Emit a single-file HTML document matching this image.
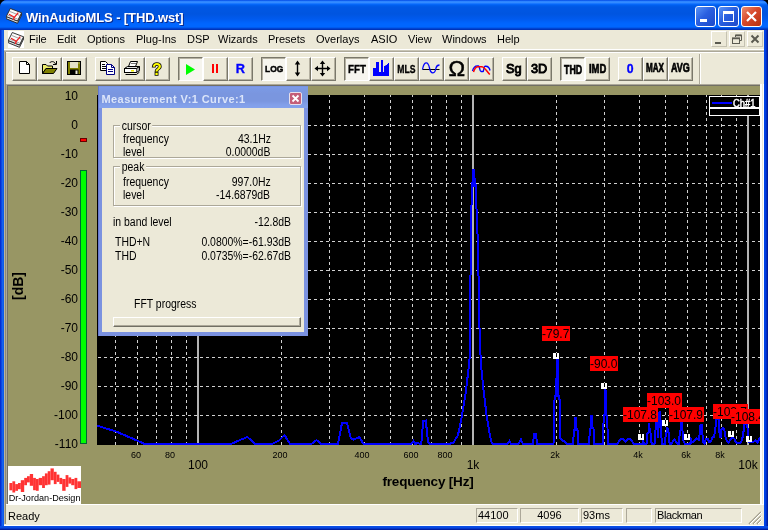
<!DOCTYPE html>
<html><head><meta charset="utf-8"><title>WinAudioMLS - [THD.wst]</title>
<style>
*{box-sizing:border-box;margin:0;padding:0}
html,body{width:768px;height:530px;overflow:hidden;background:#000}
body{font-family:"Liberation Sans",sans-serif;font-size:11px;color:#000;position:relative}
.abs{position:absolute}
#frame{will-change:transform;position:absolute;left:0;top:0;width:768px;height:530px;background:#0046d5;border-radius:7px 7px 0 0;overflow:hidden}
#title{position:absolute;left:0;top:0;width:768px;height:30px;background:linear-gradient(180deg,#0040dc 0px,#1f78ff 1px,#3c91ff 2px,#2a84ff 3px,#0a6cff 4px,#0060f0 5px,#0057e4 7px,#0055e0 14px,#005aee 19px,#0062fa 22px,#0066ff 24px,#0066ff 27px,#0050e0 28px,#0038c4 29px,#002fb0 30px)}
#ttext{position:absolute;left:26px;top:9px;letter-spacing:-0.12px;color:#fff;font-weight:bold;font-size:13px;line-height:18px;white-space:nowrap;text-shadow:1px 1px 0 #0a2a8c}
#lb{position:absolute;left:0;top:30px;width:4px;height:500px;background:linear-gradient(90deg,#0020c8 0,#0a3ee0 1.2px,#1462ee 2.5px,#0c55e6 4px)}
#rb{position:absolute;left:764px;top:30px;width:4px;height:500px;background:linear-gradient(90deg,#0046e8 0,#003ee0 1.5px,#0026b4 3px,#00148c 4px)}
#bb{position:absolute;left:0;top:526px;width:768px;height:4px;background:linear-gradient(180deg,#0a50e8 0,#0848e0 2px,#0026b4 3px,#00148c 4px)}
#client{position:absolute;left:0;top:0;width:768px;height:530px}
#cbg{position:absolute;left:4px;top:30px;width:760px;height:496px;background:#ece9d8}
#mdi{position:absolute;left:0;top:0;width:768px;height:530px}
.tb{position:absolute;top:6px;width:21px;height:21px;border-radius:3px;border:1px solid #fff;background:linear-gradient(135deg,#5a94f6,#2a5fe0 45%,#1d49c9)}
.tb.close{background:linear-gradient(135deg,#ec8d70,#d8492b 45%,#b8320f)}
.menu span{position:absolute;top:32px;line-height:14px;font-size:11px;white-space:nowrap}
.mb{position:absolute;top:31px;width:16px;height:16px;border:1px solid;border-color:#fff #c5c2b2 #c5c2b2 #fff}
/* toolbar buttons */
.bt{position:absolute;top:57px;width:25px;height:24px;border:1px solid;border-color:#fff #7a786b #7a786b #fff;box-shadow:inset -1px -1px 0 #b5b1a1;background:#ece9d8;overflow:hidden}
.bt.dn{border-color:#7a786b #fff #fff #7a786b;box-shadow:inset 1px 1px 0 #b5b1a1;background:#f6f5ee}
.bt svg{position:absolute;left:0;top:0;will-change:transform}
.bt .t{position:absolute;left:0;top:0;width:22px;height:21px;text-align:center;font-weight:bold;white-space:nowrap}
/* axis labels */
.yl{position:absolute;left:28px;width:50px;text-align:right;font-size:12px;line-height:14px}
.xs{position:absolute;margin-left:-1px;top:450px;width:40px;text-align:center;font-size:9px;line-height:11px}
.xb{position:absolute;top:458px;width:40px;text-align:center;font-size:12px;line-height:14px}
.gd{stroke:#d0d0d0;stroke-width:1;stroke-dasharray:3 3;shape-rendering:crispEdges}
.ml{font-family:"Liberation Sans",sans-serif;font-size:12px;fill:#000}
/* dialog */
#dlg{position:absolute;left:98px;top:86px;width:210px;height:250px;background:#7b92e0;box-shadow:inset 1px 0 0 #6678d0}
#dlgt{position:absolute;left:1px;top:0;width:209px;height:22px;background:linear-gradient(180deg,#6f8ade 0,#7d9ce8 1px,#7b99e4 3px,#7a96df 8px,#7a96df 15px,#82a0ea 19px,#84a2ec 22px)}
#dlgb{position:absolute;left:4px;top:22px;width:202px;height:224px;background:#ece9d8}
.dt{position:absolute;font-size:12px;line-height:14px;white-space:nowrap;transform:scaleX(.87);transform-origin:0 0}
.dr{position:absolute;font-size:12px;line-height:14px;white-space:nowrap;transform:scaleX(.87);transform-origin:100% 0;text-align:right}
.gb{position:absolute;border:1px solid #aca899;box-shadow:1px 1px 0 #fff, inset 1px 1px 0 #fff}
.gl{position:absolute;background:#ece9d8;padding:0 2px;font-size:12px;line-height:14px;transform:scaleX(.87);transform-origin:0 0}
/* status */
.sp{position:absolute;top:508px;height:15px;border:1px solid;border-color:#aca899 #fff #fff #aca899;font-size:11px;line-height:13px;padding-left:1px;white-space:nowrap}

</style></head><body>
<div id="frame">
<div id="title">
 <svg class="abs" style="left:6px;top:8px" width="16" height="16" viewBox="0 0 16 16"><polygon points="0.3,8.5 11.5,13 15.6,4.8 15.6,7 11.5,15.3 0.3,10.8" fill="#ddd" stroke="#222" stroke-width="0.9"/><polygon points="4.3,0.5 15.6,4.8 11.5,13 0.3,8.5" fill="#fafafa" stroke="#222" stroke-width="0.9"/><path d="M3.6,3.4 L13.6,7.4 M1.8,7.2 L11.6,11.1" stroke="#8a8a8a" stroke-width="0.8" fill="none"/><path d="M3,6.2 L8.4,9.2 L12.3,4.6 M8.4,9.2 L7.2,12" stroke="#f02020" stroke-width="1.3" fill="none"/></svg>
 <div id="ttext">WinAudioMLS - [THD.wst]</div>
 <div class="tb" style="left:695px"><div class="abs" style="left:4px;top:12px;width:7px;height:3px;background:#fff"></div></div>
 <div class="tb" style="left:718px"><div class="abs" style="left:4px;top:4px;width:11px;height:11px;border:1px solid #fff;border-top-width:3px"></div></div>
 <div class="tb close" style="left:741px"><svg class="abs" style="left:0;top:0" width="19" height="19"><path d="M5,5 L14,14 M14,5 L5,14" stroke="#fff" stroke-width="2.2"/></svg></div>
</div>

<div id="lb"></div><div id="rb"></div><div id="bb"></div>
<div id="client">
<div id="cbg"></div>
<div class="abs" style="left:8px;top:31px;width:16px;height:17px;background:#fff"></div>
<svg class="abs" style="left:8px;top:31.5px" width="16" height="16" viewBox="0 0 16 16"><polygon points="0.3,8.5 11.5,13 15.6,4.8 15.6,7 11.5,15.3 0.3,10.8" fill="#ddd" stroke="#222" stroke-width="0.9"/><polygon points="4.3,0.5 15.6,4.8 11.5,13 0.3,8.5" fill="#fafafa" stroke="#222" stroke-width="0.9"/><path d="M3.6,3.4 L13.6,7.4 M1.8,7.2 L11.6,11.1" stroke="#8a8a8a" stroke-width="0.8" fill="none"/><path d="M3,6.2 L8.4,9.2 L12.3,4.6 M8.4,9.2 L7.2,12" stroke="#f02020" stroke-width="1.3" fill="none"/></svg>
<div class="menu">
<span style="left:29px">File</span><span style="left:57px">Edit</span><span style="left:87px">Options</span><span style="left:136px">Plug-Ins</span><span style="left:187px">DSP</span><span style="left:218px">Wizards</span><span style="left:268px">Presets</span><span style="left:316px">Overlays</span><span style="left:371px">ASIO</span><span style="left:408px">View</span><span style="left:442px">Windows</span><span style="left:497px">Help</span>
</div>
<div class="mb" style="left:711px"><div class="abs" style="left:3px;top:10px;width:6px;height:2px;background:#5a5a50"></div></div>
<div class="mb" style="left:729px"><svg class="abs" style="left:0;top:0" width="14" height="14"><path d="M5.5,5 V3 H11.5 V8.5 H9.5" fill="none" stroke="#5a5a50" stroke-width="1"/><path d="M5,3.5 H12" stroke="#5a5a50" stroke-width="1.6"/><rect x="2.5" y="6" width="7" height="5.5" fill="none" stroke="#5a5a50"/><path d="M2,6.5 H10" stroke="#5a5a50" stroke-width="1.6"/></svg></div>
<div class="mb" style="left:747px"><svg class="abs" style="left:0;top:0" width="14" height="14"><path d="M3.5,3.5 L10.5,10.5 M10.5,3.5 L3.5,10.5" stroke="#5a5a50" stroke-width="2"/></svg></div>

<div class="abs" style="left:4px;top:49px;width:760px;height:1px;background:#fff"></div>
<div class="abs" style="left:4px;top:50px;width:760px;height:1px;background:#c9c6b6"></div>
<div class="abs" style="left:4px;top:51px;width:760px;height:1px;background:#aca899"></div>
<div class="abs" style="left:4px;top:52px;width:760px;height:1px;background:#fff"></div>
<div class="abs" style="left:699px;top:54px;width:1px;height:30px;background:#aca899"></div>
<div class="abs" style="left:700px;top:54px;width:1px;height:30px;background:#fff"></div>
<div class="bt" style="left:12px"><svg width="23" height="22" viewBox="0 0 23 22"><path d="M6.5,3.5 H13.5 L16.5,6.5 V15.5 H6.5 Z" fill="#fff" stroke="#000"/><path d="M13.5,3.5 V6.5 H16.5" fill="none" stroke="#000"/></svg></div>
<div class="bt" style="left:37px"><svg width="23" height="22" viewBox="0 0 23 22"><path d="M4.5,15.5 V6.5 H8 L9.5,8 H14.5 V10.5 H8 Z" fill="#ecec6a" stroke="#000" stroke-width="1"/><path d="M4.5,15.5 L8,10.5 H19 L15.5,15.5 Z" fill="#808000" stroke="#000" stroke-width="1"/><path d="M11.5,5 C13,3 16.5,3 17.5,6" fill="none" stroke="#000"/><path d="M15,6.5 H18.5 V3" fill="none" stroke="#000"/></svg></div>
<div class="bt" style="left:62px"><svg width="23" height="22" viewBox="0 0 23 22"><rect x="4.5" y="3.5" width="13" height="13" fill="#808000" stroke="#000"/><rect x="7" y="4" width="8" height="6" fill="#e4e1c8"/><rect x="7" y="11.5" width="8.5" height="5" fill="#000"/><rect x="12.5" y="12.5" width="2" height="3.5" fill="#ece9d8"/><rect x="15.5" y="4.5" width="1" height="1" fill="#ece9d8"/></svg></div>
<div class="bt" style="left:95px"><svg width="23" height="22" viewBox="0 0 23 22"><path d="M4.5,3.5 H9.5 L11.5,5.5 V12.5 H4.5 Z" fill="#fff" stroke="#000"/><path d="M6,6.5 H9 M6,8.5 H10 M6,10.5 H10" stroke="#000"/><path d="M10.5,6.5 H15.5 L18.5,9.5 V16.5 H10.5 Z" fill="#fff" stroke="#000080"/><path d="M15.5,6.5 V9.5 H18.5" fill="none" stroke="#000080"/><path d="M12,11.5 H17 M12,13.5 H17" stroke="#000080"/></svg></div>
<div class="bt" style="left:120px"><svg width="23" height="22" viewBox="0 0 23 22"><path d="M7.5,8.5 L9.5,3.5 H16.5 L14.5,8.5 Z" fill="#fff" stroke="#000"/><path d="M10,5.5 H15" stroke="#777"/><path d="M3.5,10.5 L6.5,8.5 H18.5 L15.5,10.5 Z" fill="#ddd" stroke="#000"/><rect x="3.5" y="10.5" width="12" height="4" fill="#fff" stroke="#000"/><path d="M15.5,10.5 L18.5,8.5 V12.5 L15.5,14.5" fill="#aaa" stroke="#000"/><path d="M4.5,16.5 H15.5 L18.5,14" fill="none" stroke="#000"/><rect x="10" y="12" width="3" height="1.5" fill="#ee0"/></svg></div>
<div class="bt" style="left:145px"><svg width="23" height="22" viewBox="0 0 23 22"><text x="6" y="16.5" font-size="16" fill="#ff0" stroke="#000" stroke-width="1.6" paint-order="stroke" font-family="Liberation Sans,sans-serif" font-weight="bold">?</text></svg></div>
<div class="bt dn" style="left:178px"><svg width="23" height="22" viewBox="0 0 23 22"><polygon points="7,6 16,11.5 7,17" fill="#0f0"/></svg></div>
<div class="bt" style="left:203px"><svg width="23" height="22" viewBox="0 0 23 22"><rect x="8" y="6" width="2" height="9" fill="#f00"/><rect x="12" y="6" width="2" height="9" fill="#f00"/></svg></div>
<div class="bt" style="left:228px"><svg width="23" height="22" viewBox="0 0 23 22"><text x="6.7" y="14.7" font-size="13" textLength="9.2" lengthAdjust="spacingAndGlyphs" fill="#00f" stroke="#00f" stroke-width="0.35" font-family="Liberation Sans,sans-serif" font-weight="bold">R</text></svg></div>
<div class="bt dn" style="left:261px"><svg width="23" height="22" viewBox="0 0 23 22"><text x="3" y="14" font-size="9.6" textLength="18.3" lengthAdjust="spacingAndGlyphs" fill="#000" stroke="#000" stroke-width="0.5" font-family="Liberation Sans,sans-serif" font-weight="bold">LOG</text></svg></div>
<div class="bt" style="left:286px"><svg width="23" height="22" viewBox="0 0 23 22"><path d="M10.5,4 V17" stroke="#000" stroke-width="1.4"/><polygon points="10.5,2.5 7.8,6.5 13.2,6.5"/><polygon points="10.5,18.5 7.8,14.5 13.2,14.5"/></svg></div>
<div class="bt" style="left:311px"><svg width="23" height="22" viewBox="0 0 23 22"><path d="M10.5,4 V17 M4,10.5 H17" stroke="#000" stroke-width="1.4"/><polygon points="10.5,2.5 7.8,6 13.2,6"/><polygon points="10.5,18.5 7.8,15 13.2,15"/><polygon points="2.5,10.5 6,7.8 6,13.2"/><polygon points="18.5,10.5 15,7.8 15,13.2"/></svg></div>
<div class="bt dn" style="left:344px"><svg width="23" height="22" viewBox="0 0 23 22"><text x="3" y="14.7" font-size="11" textLength="18" lengthAdjust="spacingAndGlyphs" fill="#000" stroke="#000" stroke-width="0.35" font-family="Liberation Sans,sans-serif" font-weight="bold">FFT</text></svg></div>
<div class="bt" style="left:369px"><svg width="23" height="22" viewBox="0 0 23 22"><path d="M3,18 V10 H6 V4 H9 V14 H11 V2 H13 V14 H14 V8 H15 V7.5 H16 V7 H17 V6 H18 V5 H19 V18 Z" fill="#00f"/></svg></div>
<div class="bt" style="left:394px"><svg width="23" height="22" viewBox="0 0 23 22"><text x="2.3" y="14.7" font-size="11" textLength="18.2" lengthAdjust="spacingAndGlyphs" fill="#000" stroke="#000" stroke-width="0.35" font-family="Liberation Sans,sans-serif" font-weight="bold">MLS</text></svg></div>
<div class="bt" style="left:419px"><svg width="23" height="22" viewBox="0 0 23 22"><path d="M2.5,11.5 H19.5" stroke="#000"/><path d="M2.5,11.5 C4,3 8,3 9.5,10 C11,17 15,16 16,10 C16.5,8 18,7 19.5,7" fill="none" stroke="#00f" stroke-width="1.3"/></svg></div>
<div class="bt" style="left:444px"><svg width="23" height="22" viewBox="0 0 23 22"><text x="3.5" y="17.5" font-size="22.5" font-family="Liberation Sans,sans-serif" textLength="16.6" lengthAdjust="spacingAndGlyphs" stroke="#000" stroke-width="0.5">&#937;</text></svg></div>
<div class="bt" style="left:469px"><svg width="23" height="22" viewBox="0 0 23 22"><path d="M2.5,13 C3.5,9 6,7.6 8.5,8 C10,8.5 9.5,13.5 11,13.5 H13 C14,13.5 13.5,8.5 15,8.3 C17.5,8 19.5,10 20,12.5" fill="none" stroke="#00f" stroke-width="1.4"/><path d="M3.5,14 C4.5,10.5 6,8.7 8,8.7 H12 C14.5,9 16.5,13 19.8,16.5" fill="none" stroke="#f00" stroke-width="1.5"/></svg></div>
<div class="bt" style="left:502px"><svg width="23" height="22" viewBox="0 0 23 22"><text x="3" y="14.7" font-size="13.5" textLength="15.6" lengthAdjust="spacingAndGlyphs" fill="#000" stroke="#000" stroke-width="1" font-family="Liberation Sans,sans-serif" font-weight="normal">Sg</text></svg></div>
<div class="bt" style="left:527px"><svg width="23" height="22" viewBox="0 0 23 22"><text x="3" y="14.7" font-size="13.5" textLength="16.2" lengthAdjust="spacingAndGlyphs" fill="#000" stroke="#000" stroke-width="1" font-family="Liberation Sans,sans-serif" font-weight="normal">3D</text></svg></div>
<div class="bt dn" style="left:560px"><svg width="23" height="22" viewBox="0 0 23 22"><text x="3" y="15.5" font-size="13" textLength="18.2" lengthAdjust="spacingAndGlyphs" fill="#000" stroke="#000" stroke-width="0.7" font-family="Liberation Sans,sans-serif" font-weight="bold">THD</text></svg></div>
<div class="bt" style="left:585px"><svg width="23" height="22" viewBox="0 0 23 22"><text x="3" y="14.8" font-size="13" textLength="17.3" lengthAdjust="spacingAndGlyphs" fill="#000" stroke="#000" stroke-width="0.7" font-family="Liberation Sans,sans-serif" font-weight="bold">IMD</text></svg></div>
<div class="bt" style="left:618px"><svg width="23" height="22" viewBox="0 0 23 22"><text x="7.8" y="14.8" font-size="13" textLength="6.8" lengthAdjust="spacingAndGlyphs" fill="#00f" stroke="#00f" stroke-width="0.35" font-family="Liberation Sans,sans-serif" font-weight="bold">0</text></svg></div>
<div class="bt" style="left:643px"><svg width="23" height="22" viewBox="0 0 23 22"><text x="2" y="14" font-size="12" textLength="18" lengthAdjust="spacingAndGlyphs" fill="#000" stroke="#000" stroke-width="0.7" font-family="Liberation Sans,sans-serif" font-weight="bold">MAX</text></svg></div>
<div class="bt" style="left:668px"><svg width="23" height="22" viewBox="0 0 23 22"><text x="2" y="14" font-size="12" textLength="18.8" lengthAdjust="spacingAndGlyphs" fill="#000" stroke="#000" stroke-width="0.7" font-family="Liberation Sans,sans-serif" font-weight="bold">AVG</text></svg></div>

<div id="mdi">
<!-- mdi sunken edge + olive -->
<div class="abs" style="left:6px;top:84px;width:756px;height:420px;background:#aca899"></div>
<div class="abs" style="left:7px;top:85px;width:755px;height:419px;background:#716f64"></div>
<div class="abs" style="left:760px;top:84px;width:4px;height:420px;background:linear-gradient(90deg,#fff 0,#fff 2px,#ece9d8 2px,#ece9d8 3px,#fff 3px)"></div>
<div class="abs" style="left:4px;top:52px;width:1px;height:472px;background:#b8b39e"></div>
<div class="abs" style="left:5px;top:52px;width:1px;height:472px;background:#8d8976"></div>
<div class="abs" style="left:8px;top:86px;width:752px;height:418px;background:#989664"></div>
<div class="yl" style="top:89px">10</div>
<div class="yl" style="top:118px">0</div>
<div class="yl" style="top:147px">-10</div>
<div class="yl" style="top:176px">-20</div>
<div class="yl" style="top:205px">-30</div>
<div class="yl" style="top:234px">-40</div>
<div class="yl" style="top:263px">-50</div>
<div class="yl" style="top:292px">-60</div>
<div class="yl" style="top:321px">-70</div>
<div class="yl" style="top:350px">-80</div>
<div class="yl" style="top:379px">-90</div>
<div class="yl" style="top:408px">-100</div>
<div class="yl" style="top:437px">-110</div>
<div class="xs" style="left:117px">60</div>
<div class="xs" style="left:151px">80</div>
<div class="xb" style="left:178px">100</div>
<div class="xs" style="left:261px">200</div>
<div class="xs" style="left:343px">400</div>
<div class="xs" style="left:392px">600</div>
<div class="xs" style="left:426px">800</div>
<div class="xb" style="left:453px">1k</div>
<div class="xs" style="left:536px">2k</div>
<div class="xs" style="left:619px">4k</div>
<div class="xs" style="left:667px">6k</div>
<div class="xs" style="left:701px">8k</div>
<div class="xb" style="left:728px">10k</div>
<div class="abs" style="left:-32.5px;top:277.5px;width:100px;height:16px;line-height:16px;text-align:center;font-weight:bold;font-size:14px;transform:rotate(-90deg)">[dB]</div>
<div class="abs" style="left:328px;top:473.5px;width:200px;text-align:center;font-weight:bold;font-size:13.5px;letter-spacing:-0.2px;line-height:16px">frequency [Hz]</div>
<!-- level meter -->
<div class="abs" style="left:80px;top:170px;width:7px;height:274px;background:#0f0;border:1px solid #063"></div>
<div class="abs" style="left:80px;top:138px;width:7px;height:4px;background:#f00;border:1px solid #600"></div>
<!-- logo -->
<div class="abs" style="left:8px;top:466px;width:73px;height:38px;background:#fff"></div>
<svg class="abs" style="left:8px;top:466px" width="73" height="38" viewBox="0 0 73 38"><g fill="#ff3333"><rect x="1.4" y="17.0" width="3.0" height="7.3"/><rect x="4.4" y="15.3" width="2.8" height="11.2"/><rect x="7.2" y="18.1" width="2.8" height="6.7"/><rect x="10.0" y="17.0" width="2.8" height="6.2"/><rect x="12.8" y="14.2" width="3.4" height="11.8"/><rect x="16.2" y="11.9" width="2.8" height="7.3"/><rect x="19.0" y="10.2" width="2.8" height="6.2"/><rect x="21.8" y="8.0" width="3.3" height="11.8"/><rect x="25.1" y="11.9" width="2.8" height="12.3"/><rect x="27.9" y="13.0" width="2.8" height="11.8"/><rect x="30.7" y="11.9" width="3.4" height="7.3"/><rect x="34.1" y="10.2" width="2.8" height="11.8"/><rect x="36.9" y="7.4" width="2.8" height="11.8"/><rect x="39.7" y="5.2" width="2.8" height="13.4"/><rect x="42.5" y="2.4" width="3.3" height="11.8"/><rect x="45.8" y="5.8" width="2.8" height="12.3"/><rect x="48.6" y="8.6" width="2.8" height="7.3"/><rect x="51.4" y="11.9" width="2.8" height="6.2"/><rect x="54.2" y="13.0" width="3.4" height="11.8"/><rect x="57.6" y="9.1" width="2.8" height="11.8"/><rect x="60.4" y="11.4" width="2.8" height="6.2"/><rect x="63.2" y="13.0" width="3.3" height="6.2"/><rect x="66.5" y="11.9" width="2.8" height="11.2"/><rect x="69.3" y="15.3" width="3.7" height="6.7"/></g><text x="0.7" y="34.7" font-family="Liberation Sans,sans-serif" font-size="9.5" textLength="71.8" lengthAdjust="spacingAndGlyphs" fill="#000">Dr-Jordan-Design</text></svg>

<svg class="abs" style="left:97px;top:95px" width="663" height="350" viewBox="0 0 663 350">
<rect x="0" y="0" width="663" height="350" fill="#000"/>
<line x1="18.5" y1="0" x2="18.5" y2="350" class="gd" stroke-dashoffset="1"/>
<line x1="40.5" y1="0" x2="40.5" y2="350" class="gd" stroke-dashoffset="1"/>
<line x1="59.5" y1="0" x2="59.5" y2="350" class="gd" stroke-dashoffset="1"/>
<line x1="74.5" y1="0" x2="74.5" y2="350" class="gd" stroke-dashoffset="1"/>
<line x1="89.5" y1="0" x2="89.5" y2="350" class="gd" stroke-dashoffset="1"/>
<line x1="184.5" y1="0" x2="184.5" y2="350" class="gd" stroke-dashoffset="1"/>
<line x1="232.5" y1="0" x2="232.5" y2="350" class="gd" stroke-dashoffset="1"/>
<line x1="267.5" y1="0" x2="267.5" y2="350" class="gd" stroke-dashoffset="1"/>
<line x1="293.5" y1="0" x2="293.5" y2="350" class="gd" stroke-dashoffset="1"/>
<line x1="315.5" y1="0" x2="315.5" y2="350" class="gd" stroke-dashoffset="1"/>
<line x1="334.5" y1="0" x2="334.5" y2="350" class="gd" stroke-dashoffset="1"/>
<line x1="349.5" y1="0" x2="349.5" y2="350" class="gd" stroke-dashoffset="1"/>
<line x1="364.5" y1="0" x2="364.5" y2="350" class="gd" stroke-dashoffset="1"/>
<line x1="459.5" y1="0" x2="459.5" y2="350" class="gd" stroke-dashoffset="1"/>
<line x1="507.5" y1="0" x2="507.5" y2="350" class="gd" stroke-dashoffset="1"/>
<line x1="542.5" y1="0" x2="542.5" y2="350" class="gd" stroke-dashoffset="1"/>
<line x1="568.5" y1="0" x2="568.5" y2="350" class="gd" stroke-dashoffset="1"/>
<line x1="590.5" y1="0" x2="590.5" y2="350" class="gd" stroke-dashoffset="1"/>
<line x1="609.5" y1="0" x2="609.5" y2="350" class="gd" stroke-dashoffset="1"/>
<line x1="624.5" y1="0" x2="624.5" y2="350" class="gd" stroke-dashoffset="1"/>
<line x1="639.5" y1="0" x2="639.5" y2="350" class="gd" stroke-dashoffset="1"/>
<line x1="0" y1="30.5" x2="663" y2="30.5" class="gd" stroke-dashoffset="5"/>
<line x1="0" y1="59.5" x2="663" y2="59.5" class="gd" stroke-dashoffset="5"/>
<line x1="0" y1="88.5" x2="663" y2="88.5" class="gd" stroke-dashoffset="5"/>
<line x1="0" y1="117.5" x2="663" y2="117.5" class="gd" stroke-dashoffset="5"/>
<line x1="0" y1="146.5" x2="663" y2="146.5" class="gd" stroke-dashoffset="5"/>
<line x1="0" y1="175.5" x2="663" y2="175.5" class="gd" stroke-dashoffset="5"/>
<line x1="0" y1="204.5" x2="663" y2="204.5" class="gd" stroke-dashoffset="5"/>
<line x1="0" y1="233.5" x2="663" y2="233.5" class="gd" stroke-dashoffset="5"/>
<line x1="0" y1="262.5" x2="663" y2="262.5" class="gd" stroke-dashoffset="5"/>
<line x1="0" y1="291.5" x2="663" y2="291.5" class="gd" stroke-dashoffset="5"/>
<line x1="0" y1="320.5" x2="663" y2="320.5" class="gd" stroke-dashoffset="5"/>
<rect x="100" y="0" width="2" height="350" fill="#b4b4b4"/>
<rect x="375" y="0" width="2" height="350" fill="#b4b4b4"/>
<rect x="650" y="0" width="2" height="350" fill="#b4b4b4"/>
<polyline points="0.0,330.5 1.0,331.0 19.0,336.5 40.0,345.5 47.5,349.0 134.0,349.0 143.0,345.0 150.5,342.0 158.0,349.0 175.0,349.0 182.0,345.5 187.5,340.0 193.0,349.0 214.5,349.0 219.5,345.0 224.0,349.0 241.0,349.0 245.0,328.0 250.0,328.0 254.0,343.5 256.5,344.6 262.5,342.0 266.5,349.0 314.0,349.0 316.4,346.0 318.3,349.0 320.4,348.0 324.3,349.0 326.2,326.0 328.8,325.5 331.0,347.0 332.5,349.0 352.0,349.0 356.6,347.5 361.0,340.0 364.7,322.0 368.7,297.6 372.3,267.5 373.2,255.0 373.4,194.0 374.0,124.0 375.0,97.0 376.2,74.0 377.3,83.0 379.0,92.0 379.6,117.0 380.7,143.0 381.6,185.0 382.2,225.0 383.8,267.5 386.8,297.6 389.8,322.0 392.8,340.0 395.0,348.5 410.0,349.0 412.4,346.0 414.0,349.0 421.5,349.0 423.9,344.4 426.0,349.0 436.0,349.0 437.0,339.0 439.0,339.0 440.0,349.0 456.5,349.0 457.5,305.0 458.5,300.0 459.5,283.0 460.0,262.0 460.7,283.0 461.5,300.0 462.6,305.0 462.8,342.0 464.5,345.0 467.4,346.5 469.5,349.0 476.0,349.0 477.0,335.0 478.0,333.0 478.5,322.0 479.0,333.0 480.5,335.0 481.0,349.0 492.0,349.0 493.0,334.0 494.0,332.0 494.6,320.0 495.2,332.0 496.5,334.0 497.0,349.0 506.0,349.0 506.7,321.0 507.8,319.0 508.3,294.0 508.9,319.0 510.3,321.0 510.8,349.0 520.0,349.0 521.5,347.0 524.2,343.7 526.5,344.0 528.5,346.3 531.0,344.0 533.0,343.7 535.6,347.0 537.0,349.0 545.4,349.0 546.0,346.0 547.0,349.0 549.5,349.0 550.2,338.5 551.6,337.0 552.2,328.0 552.8,337.0 554.0,338.5 554.6,349.0 557.5,349.0 558.5,335.0 559.7,323.0 560.5,335.0 561.2,343.0 561.8,323.0 562.6,316.0 563.5,325.0 564.0,333.0 564.8,349.0 568.0,349.0 568.8,338.5 569.8,337.0 570.5,332.6 571.2,337.0 572.0,338.5 572.6,349.0 574.5,349.0 576.0,346.0 577.8,344.5 579.0,347.5 581.0,349.0 582.0,349.0 582.8,337.0 583.8,335.0 584.4,323.0 585.0,335.0 586.0,337.0 586.5,346.0 588.0,349.0 593.0,349.0 594.0,344.5 595.0,347.4 596.9,346.4 599.7,343.5 601.7,344.5 602.6,339.7 603.6,329.6 605.3,329.6 605.5,339.7 606.5,347.4 607.5,348.8 608.9,343.5 610.8,343.5 612.3,347.4 614.2,346.4 615.6,341.6 617.1,341.6 618.2,335.4 619.2,324.3 621.7,324.3 621.9,333.0 622.9,341.6 624.0,341.6 624.3,334.9 625.8,333.0 627.2,333.9 628.2,340.7 629.6,345.5 631.5,347.4 633.5,344.5 635.4,343.0 637.3,343.5 638.8,347.4 641.2,347.9 644.1,347.4 645.5,342.6 646.5,336.8 647.0,329.0 649.9,329.0 650.6,333.9 650.8,340.7 651.5,347.0 655.6,347.4 658.5,345.5 660.5,347.4 662.4,343.5 664.0,343.0" fill="none" stroke="#00f" stroke-width="2" stroke-linejoin="miter" shape-rendering="crispEdges"/>
<g fill="#00f" shape-rendering="crispEdges">
<rect x="375" y="74" width="3" height="10"/><rect x="375" y="83" width="4" height="9"/>
<rect x="459" y="264" width="3" height="38"/>
<rect x="507" y="295" width="3" height="26"/>
<rect x="477" y="322" width="3" height="14"/>
<rect x="493" y="320" width="3" height="14"/>
</g>
<rect x="445" y="231" width="28" height="15" fill="#f00"/><text x="445" y="243" class="ml">-79.7</text>
<rect x="493" y="261" width="28" height="15" fill="#f00"/><text x="493" y="273" class="ml">-90.0</text>
<rect x="526" y="312" width="35" height="15" fill="#f00"/><text x="526" y="324" class="ml">-107.8</text>
<rect x="550" y="298" width="35" height="15" fill="#f00"/><text x="550" y="310" class="ml">-103.0</text>
<rect x="572" y="312" width="35" height="15" fill="#f00"/><text x="572" y="324" class="ml">-107.9</text>
<rect x="616" y="309" width="35" height="15" fill="#f00"/><text x="616" y="321" class="ml">-102.7</text>
<rect x="634" y="314" width="35" height="15" fill="#f00"/><text x="634" y="326" class="ml">-108.4</text>
<rect x="456" y="258" width="6" height="6" fill="#fff"/><rect x="459" y="258" width="1" height="4" fill="#000"/>
<rect x="504" y="288" width="6" height="6" fill="#fff"/><rect x="507" y="288" width="1" height="4" fill="#000"/>
<rect x="541" y="339" width="6" height="6" fill="#fff"/><rect x="544" y="339" width="1" height="4" fill="#000"/>
<rect x="565" y="325" width="6" height="6" fill="#fff"/><rect x="568" y="325" width="1" height="4" fill="#000"/>
<rect x="587" y="339" width="6" height="6" fill="#fff"/><rect x="590" y="339" width="1" height="4" fill="#000"/>
<rect x="631" y="336" width="6" height="6" fill="#fff"/><rect x="634" y="336" width="1" height="4" fill="#000"/>
<rect x="649" y="341" width="6" height="6" fill="#fff"/><rect x="652" y="341" width="1" height="4" fill="#000"/>
<!-- legend -->
<rect x="612.5" y="1.5" width="50" height="19" fill="#000" stroke="#fff"/>
<rect x="613" y="12" width="50" height="2" fill="#fff"/>
<rect x="615" y="7" width="20" height="2" fill="#00f"/>
<text x="636" y="11.7" class="ml" style="fill:#fff;stroke:#fff;stroke-width:0.45px;font-size:10.5px" textLength="22.5" lengthAdjust="spacingAndGlyphs">Ch#1</text>
</svg>

<div id="dlg">
 <div id="dlgt"></div>
 <div class="abs" style="left:3.5px;top:5.3px;color:#dbe5fa;font-weight:bold;font-size:11px;line-height:16px;white-space:nowrap;letter-spacing:0.42px">Measurement V:1 Curve:1</div>
 <div class="abs" style="left:191px;top:6px;width:13px;height:13px;border:1px solid #e8e0ec;border-radius:2px;background:#c45e78"><svg class="abs" style="left:0;top:0" width="11" height="11"><path d="M2.5,2.5 L8.5,8.5 M8.5,2.5 L2.5,8.5" stroke="#fff" stroke-width="1.8"/></svg></div>
 <div id="dlgb"></div>
 <!-- coordinates inside dlg = page - (98,86) -->
 <div class="gb" style="left:15px;top:39px;width:188px;height:33px"></div>
 <div class="gl" style="left:22px;top:33px">cursor</div>
 <div class="dt" style="left:25px;top:46px">frequency</div>
 <div class="dt" style="left:25px;top:59px">level</div>
 <div class="dr" style="right:37px;top:46px">43.1Hz</div>
 <div class="dr" style="right:38px;top:59px">0.0000dB</div>
 <div class="gb" style="left:15px;top:80px;width:188px;height:40px"></div>
 <div class="gl" style="left:22px;top:74px">peak</div>
 <div class="dt" style="left:25px;top:89px">frequency</div>
 <div class="dt" style="left:25px;top:102px">level</div>
 <div class="dr" style="right:37px;top:89px">997.0Hz</div>
 <div class="dr" style="right:38px;top:102px">-14.6879dB</div>
 <div class="dt" style="left:15px;top:129px">in band level</div>
 <div class="dr" style="right:17px;top:129px">-12.8dB</div>
 <div class="dt" style="left:17px;top:149px">THD+N</div>
 <div class="dt" style="left:17px;top:163px">THD</div>
 <div class="dr" style="right:17px;top:149px">0.0800%=-61.93dB</div>
 <div class="dr" style="right:17px;top:163px">0.0735%=-62.67dB</div>
 <div class="dt" style="left:36px;top:211px">FFT progress</div>
 <div class="abs" style="left:15px;top:231px;width:188px;height:10px;border:1px solid;border-color:#fff #716f64 #716f64 #fff;box-shadow:inset -1px -1px 0 #aca899"></div>
</div>

</div>
<div class="abs" style="left:6px;top:504px;width:758px;height:1px;background:#fff"></div>
<div class="abs" style="left:4px;top:525px;width:760px;height:1px;background:#fff"></div>
<div class="abs" style="left:8px;top:509px;font-size:11px;line-height:14px">Ready</div>
<div class="sp" style="left:476px;width:42px">44100</div>
<div class="sp" style="left:520px;width:59px;text-align:center;padding:0">4096</div>
<div class="sp" style="left:581px;width:42px">93ms</div>
<div class="sp" style="left:626px;width:26px"></div>
<div class="sp" style="left:655px;width:87px;letter-spacing:-0.4px">Blackman</div>
<svg class="abs" style="left:748px;top:511px" width="14" height="14"><path d="M13,1 L1,13 M13,5 L5,13 M13,9 L9,13" stroke="#a5a18f" stroke-width="1.7"/><path d="M14,1 L2,13 M14,5 L6,13 M14,9 L10,13" stroke="#fff" stroke-width="1"/></svg>

</div>
</div>
</body></html>
